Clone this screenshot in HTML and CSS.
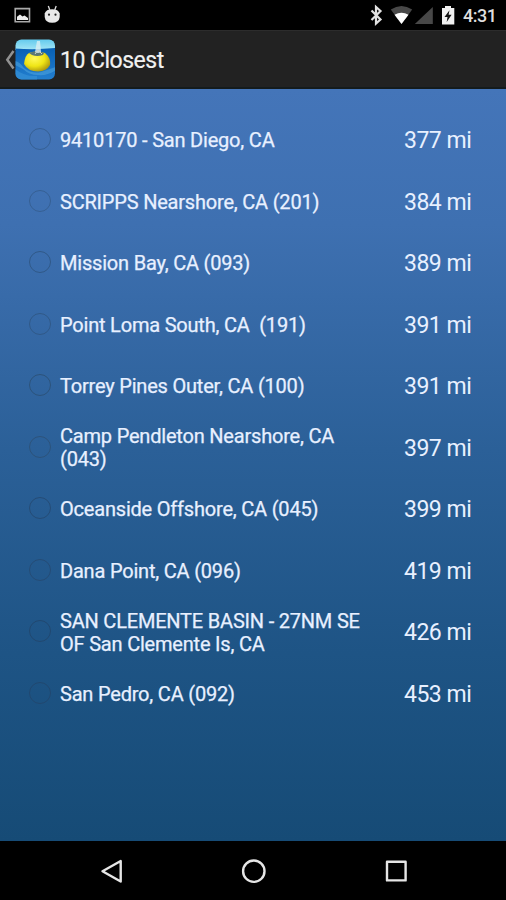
FILE: index.html
```html
<!DOCTYPE html>
<html lang="en">
<head>
<meta charset="utf-8">
<title>10 Closest</title>
<link rel="stylesheet" href="styles.css">
</head>
<body>
<div class="screen">
  <header class="status">
    <svg class="status-left" width="64" height="30" viewBox="0 0 64 30">
      <path d="M15.2 8.6h14.300v13.200H15.200z" fill="none" stroke="#aaa" stroke-width="1.6"/>
      <path d="M17 20v-3.200l3-2.400 2.500 2 2-1 3.500 2.600v2z" fill="#eee"/>
      <path d="M44.700 13.500Q46 9.200 52.200 9.200T59.700 13.500V17Q59 22.800 52.200 22.800T44.700 17z" fill="#e8e8e8"/>
      <path d="M48.300 6l1.500 4M56.200 6l-1.500 4" stroke="#ddd" stroke-width="1.300"/>
      <circle cx="49" cy="14.700" r="1.100" fill="#222"/><circle cx="55.500" cy="14.700" r="1.100" fill="#222"/>
    </svg>
    <div class="status-right">
      <svg width="90" height="30" viewBox="368 0 90 30">
        <path d="M371.500 10.500l9 9-4.500 4V7l4.500 4-9 9" fill="none" stroke="#e2e2e2" stroke-width="2.200"/>
        <path d="M390.800 9.500Q401.500 2.500 412.200 9.500L401.500 24z" fill="#484848"/>
        <path d="M394.500 14.700Q401.500 10.800 408.500 14.700L401.500 24z" fill="#fff"/>
        <path d="M432.800 7v17h-18z" fill="#484848"/>
        <path d="M442 8h3V6h6v2h3.300v16.500H442z" fill="#f1f1f1"/>
        <path d="M449.500 10.200l-5 6.700h3l-.8 5 4.900-7.200h-3z" fill="#111"/>
      </svg>
      <span class="clock">4:31</span>
    </div>
  </header>
  <div class="action-bar">
    <svg width="56" height="58" viewBox="0 31 56 58">
      <defs>
        <clipPath id="tile"><rect x="15.500" y="39.500" width="39.500" height="40" rx="6"/></clipPath>
        <linearGradient id="sky" x2="0" y2="1"><stop stop-color="#61c9ed"/><stop offset="1" stop-color="#a4e6f5"/></linearGradient>
        <linearGradient id="sea" x2="0" y2="1"><stop stop-color="#0860b5"/><stop offset="1" stop-color="#237fcf"/></linearGradient>
        <radialGradient id="buoy" cx=".4" cy=".35" r=".7"><stop stop-color="#fff95a"/><stop offset=".55" stop-color="#efe515"/><stop offset="1" stop-color="#aa9410"/></radialGradient>
      </defs>
      <path d="M13.500 51L7.300 59.800l6.200 8.700" fill="none" stroke="#929292" stroke-width="2.500"/>
      <g clip-path="url(#tile)">
        <path d="M15 39h41v11H15z" fill="url(#sky)"/>
        <path d="M15 48.500q20 1.500 41-.5v32H15z" fill="url(#sea)"/>
        <path d="M15 61q5 1 9 7 8 6 17 4l15-5v3q-9 6-18 5-9 0-15-6l-8-4z" fill="#54a9df" opacity=".5"/>
        <path d="M15 69q10 8 22 7v4H15z" fill="#3590d5" opacity=".7"/>
        <path d="M24 64q1-9 5-11 8-3 16 0 6 5 5 12-3 6-12 6.500-10 0-14-7.500z" fill="url(#buoy)"/>
        <path d="M29 53q9-4 15 0l-1 2q-6 2-11 0z" fill="#5c7775"/>
        <path d="M37 41h3l1 11q-3 2-6 0z" fill="#d9eff3" opacity=".8"/>
        <path d="M35 54l3-4 4 4" fill="none" stroke="#ccd6cb"/>
      </g>
    </svg>
    <h1>10 Closest</h1>
  </div>
  <main class="list">
    <div class="row r1"><i></i><p><span>9410170 - San Diego, CA</span></p><b>377 mi</b></div>
    <div class="row r2"><i></i><p><span>SCRIPPS Nearshore, CA (201)</span></p><b>384 mi</b></div>
    <div class="row r3"><i></i><p><span>Mission Bay, CA (093)</span></p><b>389 mi</b></div>
    <div class="row r4"><i></i><p><span>Point Loma South, CA&nbsp; (191)</span></p><b>391 mi</b></div>
    <div class="row r5"><i></i><p><span>Torrey Pines Outer, CA (100)</span></p><b>391 mi</b></div>
    <div class="row r6"><i></i><p><span>Camp Pendleton Nearshore, CA<br>(043)</span></p><b>397 mi</b></div>
    <div class="row r7"><i></i><p><span>Oceanside Offshore, CA (045)</span></p><b>399 mi</b></div>
    <div class="row r8"><i></i><p><span>Dana Point, CA (096)</span></p><b>419 mi</b></div>
    <div class="row r9"><i></i><p><span>SAN CLEMENTE BASIN - 27NM SE<br>OF San Clemente Is, CA</span></p><b>426 mi</b></div>
    <div class="row r10"><i></i><p><span>San Pedro, CA (092)</span></p><b>453 mi</b></div>
  </main>
  <nav class="nav">
    <svg width="506" height="59" viewBox="0 841 506 59" fill="none" stroke="#e6e6e6" stroke-width="2.400" stroke-linejoin="round">
      <path d="M120.700 861v20.500L102.500 871.200z"/>
      <circle cx="253.800" cy="871.200" r="10.700"/>
      <path d="M387 861.800h18.600v18.600H387z"/>
    </svg>
  </nav>
</div>
</body>
</html>
```

FILE: styles.css
```css
* { box-sizing: border-box; }
body { margin: 0; background: #000; font-family: Roboto, sans-serif; }
svg { display: block; }
.screen { width: 506px; height: 900px; display: flex; flex-direction: column; overflow: hidden; }
.status { height: 30px; display: flex; justify-content: space-between; background: #000; }
.status-right { display: flex; width: 138px; align-items: center; }
.clock { color: #dedede; font-size: 18px; font-weight: 500; line-height: 30px; letter-spacing: -.5px; margin-left: 5px; padding-top: 2px; white-space: nowrap; }
.action-bar { height: 59px; display: flex; align-items: flex-start; background: #222; border-top: 1px solid #2c2c2c; border-bottom: 2px solid #141b1d; }
.action-bar h1 { margin: 0 0 0 4px; color: #f1f1f1; font-size: 23px; font-weight: 400; letter-spacing: -.5px; line-height: 59px; -webkit-text-stroke: .2px #f1f1f1; }
.list { height: 752px; padding-top: 20px; background: linear-gradient(#4475b9 0%, #3e70b1 18%, #2b6098 48%, #1e5485 75%, #164b76 100%); }
.row { height: 61.5px; display: grid; grid-template-columns: 60px 344px 102px; align-items: center; color: #e8f0ff; }
.row i { width: 22px; height: 22px; margin-left: 29px; margin-top: -1px; border: 1.5px solid #36609a; border-color: #366094; border-radius: 50%; }
.row p { margin: 2px 0 0; font-size: 20px; line-height: 23px; letter-spacing: -.2px; white-space: nowrap; -webkit-text-stroke: .25px #e8f0ff; }
.row b { padding-top: 3px; font-size: 23px; line-height: 28px; letter-spacing: -.5px; font-weight: 400; white-space: nowrap; }
.r3 i, .r4 i { border-color: #305988; }
.r5 i, .r6 i { border-color: #2c537b; }
.r7 i, .r8 i { border-color: #254c76; }
.r9 i, .r10 i { border-color: #214870; }
.nav { height: 59px; background: #000; }
```
